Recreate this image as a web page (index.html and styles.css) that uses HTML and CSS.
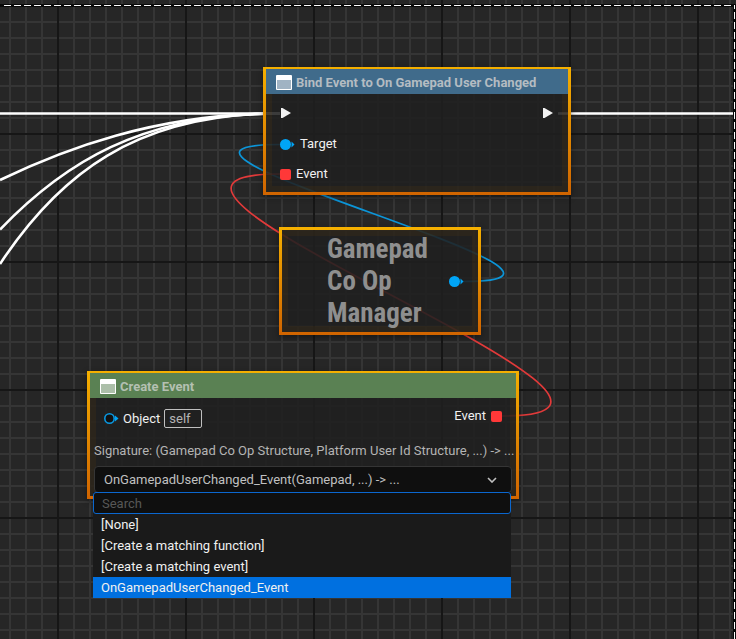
FILE: index.html
```html
<!DOCTYPE html>
<html lang="en">
<head>
<meta charset="utf-8">
<title>Event Graph</title>
<link rel="stylesheet" href="styles.css">
</head>
<body>
<main class="graph">
  <svg class="wires" aria-hidden="true">
    <g class="wire-exec">
      <path d="M0 113.500H275"/>
      <line x1="558" y1="113.500" x2="100%" y2="113.500"/>
      <path d="M0 180C60 151 155 113 280 113.500"/>
      <path d="M0 229.500C62 165 140 113 280 113.500"/>
      <path d="M0 264C58 176 135 113 280 113.500"/>
    </g>
    <path class="wire-object" d="M463 281.500C656 281.500 87 144.500 280 144.500"/>
    <path class="wire-delegate" d="M502 416C735 416 47 174 280 174"/>
  </svg>
  <svg class="frame" aria-hidden="true">
    <g class="frame-back"><line x1="0" y1="5.500" x2="100%" y2="5.500"/></g>
    <line class="frame-dash" x1="4" y1="5.500" x2="100%" y2="5.500"/>
  </svg>
  <div class="frame-side"></div>

  <section class="node node-bind">
    <header class="node-head head-blue">
      <svg class="icon" viewBox="0 0 16 15" aria-hidden="true"><rect width="16" height="15" rx="1" fill="#fff"/><rect x="1" y="5" width="14" height="9" fill="#a0b3c3"/></svg>
      <h2>Bind Event to On Gamepad User Changed</h2>
    </header>
    <div class="pins">
      <div class="pin-row exec-row">
        <svg class="exec" viewBox="0 0 11 10" aria-hidden="true"><path d="M1 0H2.500L11 5L2.500 10H1Z"/></svg>
        <svg class="exec" viewBox="0 0 11 10" aria-hidden="true"><path d="M0 0H1.500L10 5L1.500 10H0Z"/></svg>
      </div>
      <div class="pin-row"><svg class="pin" viewBox="0 0 15 11" aria-hidden="true"><circle cx="5.500" cy="5.500" r="5.500"/><path d="M11.500 2.500L14.500 5.500L11.500 8.500Z"/></svg><span>Target</span></div>
      <div class="pin-row"><i class="delegate"></i><span>Event</span></div>
    </div>
  </section>

  <section class="node node-variable">
    <h2>Gamepad<br>Co Op<br>Manager</h2>
    <svg class="pin" viewBox="0 0 15 11" aria-hidden="true"><circle cx="5.500" cy="5.500" r="5.500"/><path d="M11.500 2.500L14.500 5.500L11.500 8.500Z"/></svg>
  </section>

  <section class="node node-create">
    <header class="node-head head-green">
      <svg class="icon" viewBox="0 0 16 15" aria-hidden="true"><rect width="16" height="15" rx="1" fill="#fff"/><rect x="1" y="5" width="14" height="9" fill="#acbfa9"/></svg>
      <h2>Create Event</h2>
    </header>
    <div class="create-pins">
      <div class="object-pin">
        <svg class="pin" viewBox="0 0 15 11" aria-hidden="true"><circle cx="5.500" cy="5.500" r="4.700" class="ring"/><path d="M11 2.500L14.500 5.500L11 8.500Z"/></svg>
        <label for="object">Object</label>
        <input id="object" class="self" value="self" readonly>
      </div>
      <div class="event-pin"><span>Event</span><i class="delegate"></i></div>
    </div>
    <p class="signature">Signature: (Gamepad Co Op Structure, Platform User Id Structure, ...) -&gt; ...</p>
    <div class="picker">
      <button type="button" class="combo" aria-haspopup="true" aria-expanded="true">
        <span>OnGamepadUserChanged_Event(Gamepad, ...) -&gt; ...</span>
        <svg class="chevron" viewBox="0 0 10 6" aria-hidden="true"><path d="M1 1L5 5L9 1"/></svg>
      </button>
      <div class="menu">
        <input class="search" type="search" placeholder="Search" aria-label="Search">
        <button type="button">[None]</button>
        <button type="button">[Create a matching function]</button>
        <button type="button">[Create a matching event]</button>
        <button type="button" class="selected">OnGamepadUserChanged_Event</button>
      </div>
    </div>
  </section>
</main>
</body>
</html>
```
FILE: styles.css
```css
* { box-sizing: border-box; }
body { margin: 0; }
body, button, input { font: 13px/16px Roboto, "Liberation Sans", sans-serif; }
h2, p { margin: 0; }

.graph {
  position: relative;
  min-height: 100vh;
  overflow: hidden;
  color: #f0f0f0;
  background-color: #262626;
  background-image:
    linear-gradient(90deg, #161616 2px, transparent 2px),
    linear-gradient(#161616 2px, transparent 2px),
    linear-gradient(90deg, #353535 2px, transparent 2px),
    linear-gradient(#353535 2px, transparent 2px);
  background-size: 128px 128px, 128px 128px, 16px 16px, 16px 16px;
  background-position: 57px 0, 0 5px, 9px 0, 0 5px;
}

.wires, .frame { position: absolute; inset: 0; width: 100%; height: 100%; fill: none; }
.wire-exec { stroke: #fff; stroke-width: 2.6px; }
.wire-object { stroke: #0c95d8; stroke-width: 1.7px; }
.wire-delegate { stroke: #e23a3a; stroke-width: 1.7px; }
.frame-back { stroke: #0a0a0a; stroke-width: 3px; }
.frame-dash { stroke: #fff; stroke-width: 1px; stroke-dasharray: 7 3; }
.frame-side {
  position: absolute;
  top: 5px;
  right: 0;
  bottom: 0;
  width: 3px;
  background:
    repeating-linear-gradient(#fff 0 4px, transparent 4px 7px, #fff 7px 10px) center / 1px 100% no-repeat,
    #0a0a0a;
}

.node {
  position: absolute;
  border: 3px solid;
  border-top-width: 2px;
  border-image: linear-gradient(#f5b000, #d06400) 3;
  background: rgba(32, 32, 32, .88);
  box-shadow: 0 2px 6px rgba(0, 0, 0, .4), inset 0 0 0 6px rgba(150, 90, 0, .1);
}
.node-bind { left: 263px; top: 67px; width: 308px; height: 128px; }
.node-variable {
  left: 279px; top: 227px; width: 202px; height: 108px;
  display: flex;
  align-items: center;
  justify-content: space-between;
  padding: 0 14px 0 45px;
  border-top-width: 3px;
}
.node-create { left: 87px; top: 371px; width: 432px; height: 128px; }

.node-head { display: flex; align-items: center; gap: 4px; height: 25px; padding: 2px 10px 0; }
.node-head h2 { font-size: 13px; font-weight: 700; color: #b4bcc2; }
.head-blue { background: #406b8b; }
.head-green { background: #5a8153; }
.head-green h2 { color: #b4c0b2; }
.icon { width: 16px; height: 15px; flex: none; }

.pins { padding: 9px 14px; }
.pin-row { display: flex; align-items: center; gap: 5px; height: 30px; }
.exec-row { justify-content: space-between; height: 20px; margin-bottom: 6px; }
.exec { width: 11px; height: 10px; fill: #f2f2f2; }
.pin { width: 15px; height: 11px; flex: none; fill: #00a5f7; }
.ring { fill: #111; stroke: #0a97e0; stroke-width: 1.6px; }
.delegate { width: 11px; height: 11px; border-radius: 2px; background: #ff3838; }

.node-variable h2 {
  font: 700 27px/32px "Roboto Condensed", "Liberation Sans Narrow", Roboto, sans-serif;
  color: #8f8f8f;
}

.create-pins { display: flex; justify-content: space-between; padding: 8px 14px; height: 45px; }
.object-pin, .event-pin { display: flex; align-items: center; gap: 5px; }
.object-pin { gap: 4px; height: 25px; }
.event-pin { height: 20px; }
.self {
  width: 38px;
  height: 19px;
  padding: 0 4px;
  border: 1px solid #c0c0c0;
  border-radius: 2px;
  background: transparent;
  color: #b4b4b4;
}
.signature { padding-left: 4px; color: #b4b4b4; white-space: nowrap; }
.picker { position: relative; margin: 7px 4px 0; }
.combo {
  display: flex;
  align-items: center;
  justify-content: space-between;
  width: 100%;
  height: 27px;
  padding: 0 14px 0 9px;
  border: 1px solid #353535;
  border-radius: 4px;
  background: #0f0f0f;
  color: #c0c0c0;
}
.chevron { width: 10px; height: 6px; fill: none; stroke: #c0c0c0; stroke-width: 1.6px; }

.menu {
  position: absolute;
  top: 26px;
  left: -1px;
  width: 100%;
  background: #1a1a1a;
}
.search {
  display: block;
  width: 100%;
  height: 22px;
  padding: 0 8px;
  border: 1px solid #0b67cf;
  border-radius: 3px;
  background: #0f0f0f;
  color: #f0f0f0;
}
.search::placeholder { color: #575757; }
.menu button {
  display: block;
  width: 100%;
  height: 21px;
  padding: 0 8px;
  border: 0;
  background: transparent;
  color: #f0f0f0;
  text-align: left;
}
.menu .selected { background: #0070e0; }
```
